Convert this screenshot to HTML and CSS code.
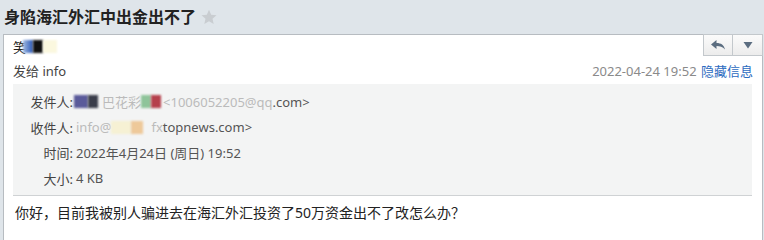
FILE: index.html
```html
<!DOCTYPE html>
<html lang="zh">
<head>
<meta charset="utf-8">
<title>身陷海汇外汇中出金出不了</title>
<link rel="stylesheet" href="styles.css">
</head>
<body>
<div class="titlebar">
  <h1 class="title">身陷海汇外汇中出金出不了</h1>
  <svg class="star" width="16" height="16" viewBox="0 0 16 16"><path d="M8 0.8l2.2 4.9 5.3 0.5-4 3.6 1.2 5.3L8 12.3l-4.7 2.8 1.2-5.3-4-3.6 5.3-0.5z" fill="#c9cdd1"/></svg>
</div>
<div class="mail">
  <div class="actions">
    <button class="btn btn-reply" aria-label="回复">
      <svg width="16" height="12" viewBox="0 0 16 12"><path d="M6.5 1L1 5.5 6.5 10V7c3.5 0 6 0.8 8.5 3.5C14 6 11 4 6.5 4z" fill="#5b6d80"/></svg>
    </button>
    <button class="btn btn-more" aria-label="更多">
      <svg width="10" height="8" viewBox="0 0 10 8"><path d="M0.5 1h9L5 7.5z" fill="#5b6d80"/></svg>
    </button>
  </div>
  <div class="from-line">
    <span>笑</span><span class="redact r-blue"></span><span class="redact r-black"></span><span class="redact r-cream"></span>
  </div>
  <div class="meta-line">
    <span class="to">发给 info</span>
    <span class="when">2022-04-24 19:52 <a class="toggle" href="#">隐藏信息</a></span>
  </div>
  <div class="details">
    <div class="row"><span class="label">发件人:</span><span class="value"><span class="redact r-purple"></span><span class="redact r-dark"></span><span class="faded">巴花彩</span><span class="redact r-green"></span><span class="redact r-red"></span><span class="faded">&lt;1006052205@qq</span>.com&gt;</span></div>
    <div class="row"><span class="label">收件人:</span><span class="value"><span class="faded">info@</span><span class="redact r-yellow"></span><span class="redact r-peach"></span><span class="faded">fx</span>topnews.com&gt;</span></div>
    <div class="row"><span class="label">时间:</span><span class="value">2022年4月24日 (周日) 19:52</span></div>
    <div class="row"><span class="label">大小:</span><span class="value">4 KB</span></div>
  </div>
  <div class="content">你好，目前我被别人骗进去在海汇外汇投资了50万资金出不了改怎么办？</div>
</div>
</body>
</html>
```
FILE: styles.css
```css
html, body {
  margin: 0;
  padding: 0;
}
body {
  width: 764px;
  height: 240px;
  overflow: hidden;
  background: #dfe5ea;
  font-family: "Noto Sans", "Noto Sans CJK SC", sans-serif;
  color: #333;
  font-size: 13px;
}
.titlebar {
  height: 34px;
  display: flex;
  align-items: center;
  padding-left: 4px;
  gap: 5px;
}
.title {
  margin: 0;
  font-size: 16px;
  font-weight: bold;
  color: #222;
  line-height: 20px;
}
.star {
  margin-top: -1px;
}
.mail {
  position: relative;
  margin: 0 1px 0 3px;
  height: 206px;
  background: #fff;
  border: 1px solid #b7bcc1;
  border-bottom: none;
  box-sizing: border-box;
}
.actions {
  position: absolute;
  top: -1px;
  right: -1px;
  display: flex;
}
.btn {
  width: 30px;
  height: 22px;
  margin: 0;
  padding: 0;
  border: 1px solid #c3c8cc;
  background: linear-gradient(#fbfbfb, #ececec);
  display: flex;
  align-items: center;
  justify-content: center;
}
.btn-more {
  border-left: none;
}
.from-line {
  height: 21px;
  padding: 0 9px;
  margin-top: 1px;
  display: flex;
  align-items: center;
  color: #222;
}
.redact {
  display: inline-block;
  height: 13px;
  filter: blur(1px);
}
.r-blue { width: 10px; background: linear-gradient(90deg, #9fb8e0, #2a58b8); margin-left: -3px; }
.r-black { width: 10px; background: #111; }
.r-cream { width: 14px; background: #fbf8df; }
.meta-line {
  height: 22px;
  padding: 0 9px;
  display: flex;
  align-items: center;
  justify-content: space-between;
  margin-top: 2px;
}
.to {
  color: #444;
}
.when {
  color: #8a8a8a;
}
.toggle {
  color: #2c6bbf;
  text-decoration: none;
  margin-left: 1px;
}
.details {
  margin: 3px 10px 0 9px;
  background: #f3f4f4;
  border-bottom: 1px solid #cfd2d4;
  padding: 5px 0 4px;
}
.row {
  display: flex;
  height: 25.5px;
  align-items: center;
  color: #555;
}
.label {
  width: 60px;
  text-align: right;
  color: #444;
}
.value {
  margin-left: 3px;
  display: flex;
  align-items: center;
}
.faded {
  color: #bbb;
}
.r-purple { width: 14px; background: #5a5a9a; margin-left: -2px; }
.r-dark { width: 10px; background: #3a3d4a; margin-right: 4px; }
.r-green { width: 10px; background: #8fc49a; }
.r-red { width: 10px; background: #b5404c; margin-right: 2px; }
.r-yellow { width: 20px; background: #f6f1d4; }
.r-peach { width: 12px; background: #eec99a; margin-right: 8px; }
.content {
  padding: 7px 11px;
  font-size: 14px;
  line-height: 20px;
  color: #222;
}
```
